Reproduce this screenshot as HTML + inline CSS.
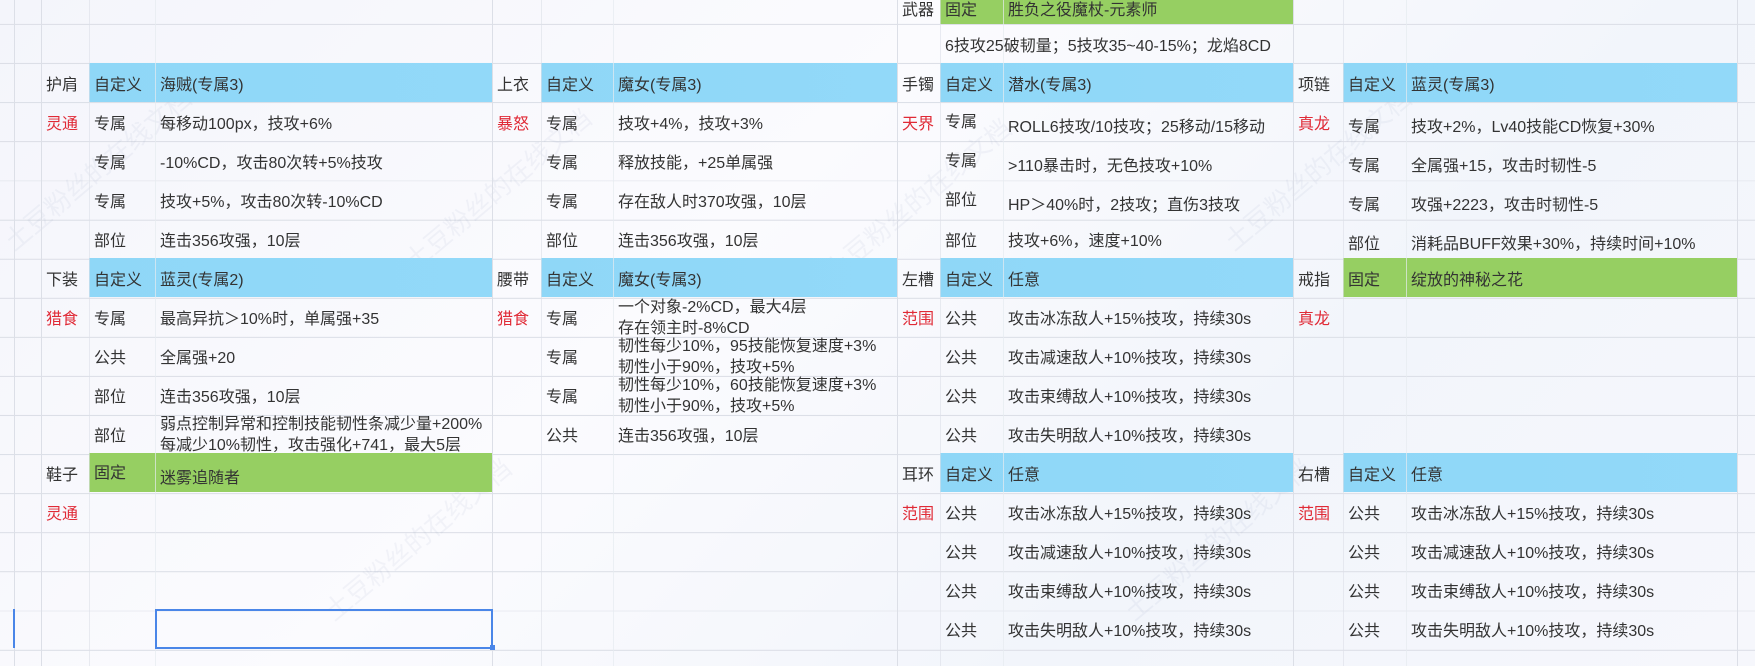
<!DOCTYPE html>
<html><head><meta charset="utf-8"><style>
*{margin:0;padding:0;box-sizing:border-box}
html,body{width:1755px;height:666px;overflow:hidden}
body{position:relative;font-family:"Liberation Sans","Noto Sans CJK SC",sans-serif;font-size:16px;color:#333;
background:linear-gradient(135deg,#f4f5fb 0%,#fbfbfe 40%,#f2f5fb 70%,#f6f7fc 100%);
background-color:#f6f7fc}
.grid{position:absolute;left:0;top:0;width:1755px;height:666px;
background-image:repeating-linear-gradient(to bottom,transparent 0,transparent 38.1px,#dcdfe7 38.1px,#dcdfe7 39.1px);
background-position:0 -14.1px}
.v{position:absolute;top:0;height:666px;width:1px;background:#dcdfe7}
.c{position:absolute;height:39px;padding-left:5px;display:flex;align-items:center;white-space:nowrap;overflow:hidden}
.b{background:linear-gradient(to right,#8fd7f7,#92d9f9);}
.g{background:#96cf62}
.r{color:#e02a36}
.bt{align-items:flex-end;padding-bottom:4px}
.tp{align-items:flex-start;padding-top:5px}
.two{display:block;line-height:21px;padding-top:0;white-space:normal}
.c0{left:41px;width:48px}.c1{left:89px;width:66px}.c2{left:155px;width:337px}
.c3{left:492px;width:49px}.c4{left:541px;width:72px}.c5{left:613px;width:284px}
.c6{left:897px;width:43px}.c7{left:940px;width:63px}.c8{left:1003px;width:290px}
.c9{left:1293px;width:50px}.c10{left:1343px;width:63px}.c11{left:1406px;width:331px}
.k0{top:-15px}.k1{top:24px}.k2{top:63px}.k3{top:102px}.k4{top:141px}.k5{top:180px}.k6{top:219px}
.k7{top:258px}.k8{top:297px}.k9{top:336px}.k10{top:375px}.k11{top:414px}.k12{top:453px}
.k13{top:492px}.k14{top:531px}.k15{top:570px}.k16{top:609px}
.wm{position:absolute;color:rgba(120,130,170,0.07);font-size:26px;transform:rotate(-40deg);white-space:nowrap}
</style></head><body>
<div class="grid"></div>
<div class="wm" style="left:-20px;top:150px">土豆粉丝的在线文档</div>
<div class="wm" style="left:380px;top:170px">土豆粉丝的在线文档</div>
<div class="wm" style="left:800px;top:180px">土豆粉丝的在线文档</div>
<div class="wm" style="left:1200px;top:150px">土豆粉丝的在线文档</div>
<div class="wm" style="left:300px;top:520px">土豆粉丝的在线文档</div>
<div class="wm" style="left:1100px;top:520px">土豆粉丝的在线文档</div>

<div class="c g c7 k0"></div><div class="c g c8 k0"></div>
<div class="c b" style="left:89px;width:403px;top:63px"></div>
<div class="c b" style="left:541px;width:356px;top:63px"></div>
<div class="c b" style="left:940px;width:353px;top:63px"></div>
<div class="c b" style="left:1343px;width:394px;top:63px"></div>
<div class="c b" style="left:89px;width:403px;top:258px"></div>
<div class="c b" style="left:541px;width:356px;top:258px"></div>
<div class="c b" style="left:940px;width:353px;top:258px"></div>
<div class="c g" style="left:1343px;width:394px;top:258px"></div>
<div class="c g" style="left:89px;width:403px;top:453px"></div>
<div class="c b" style="left:940px;width:353px;top:453px"></div>
<div class="c b" style="left:1343px;width:394px;top:453px"></div>

<div class="v" style="left:14px"></div><div class="v" style="left:41px"></div><div class="v" style="left:89px;background:rgba(220,223,231,.6)"></div>
<div class="v" style="left:155px;background:rgba(230,235,240,.7)"></div><div class="v" style="left:492px"></div><div class="v" style="left:541px;background:rgba(220,223,231,.6)"></div>
<div class="v" style="left:613px;background:rgba(230,235,240,.7)"></div><div class="v" style="left:897px"></div><div class="v" style="left:940px;background:rgba(220,223,231,.6)"></div>
<div class="v" style="left:1003px;background:rgba(230,235,240,.7)"></div><div class="v" style="left:1293px"></div><div class="v" style="left:1343px;background:rgba(220,223,231,.6)"></div>
<div class="v" style="left:1406px;background:rgba(230,235,240,.7)"></div><div class="v" style="left:1737px"></div>

<div class="c c6 k0 bt">武器</div>
<div class="c c7 k0 bt">固定</div><div class="c c8 k0 bt">胜负之役魔杖-元素师</div>
<div class="c k1" style="left:940px;width:353px">6技攻25破韧量；5技攻35~40-15%；龙焰8CD</div>

<div class="c c0 k2">护肩</div><div class="c c1 k2">自定义</div><div class="c c2 k2">海贼(专属3)</div>
<div class="c c3 k2">上衣</div><div class="c c4 k2">自定义</div><div class="c c5 k2">魔女(专属3)</div>
<div class="c c6 k2">手镯</div><div class="c c7 k2">自定义</div><div class="c c8 k2">潜水(专属3)</div>
<div class="c c9 k2">项链</div><div class="c c10 k2">自定义</div><div class="c c11 k2">蓝灵(专属3)</div>

<div class="c c0 k3 r">灵通</div><div class="c c1 k3">专属</div><div class="c c2 k3">每移动100px，技攻+6%</div>
<div class="c c3 k3 r">暴怒</div><div class="c c4 k3">专属</div><div class="c c5 k3">技攻+4%，技攻+3%</div>
<div class="c c6 k3 r">天界</div><div class="c c7 k3" style="padding-bottom:4px">专属</div><div class="c c8 k3 bt">ROLL6技攻/10技攻；25移动/15移动</div>
<div class="c c9 k3 r">真龙</div><div class="c c10 k3 bt">专属</div><div class="c c11 k3 bt">技攻+2%，Lv40技能CD恢复+30%</div>

<div class="c c1 k4">专属</div><div class="c c2 k4">-10%CD，攻击80次转+5%技攻</div>
<div class="c c4 k4">专属</div><div class="c c5 k4">释放技能，+25单属强</div>
<div class="c c7 k4" style="padding-bottom:4px">专属</div><div class="c c8 k4 bt">&gt;110暴击时，无色技攻+10%</div>
<div class="c c10 k4 bt">专属</div><div class="c c11 k4 bt">全属强+15，攻击时韧性-5</div>

<div class="c c1 k5">专属</div><div class="c c2 k5">技攻+5%，攻击80次转-10%CD</div>
<div class="c c4 k5">专属</div><div class="c c5 k5">存在敌人时370攻强，10层</div>
<div class="c c7 k5" style="padding-bottom:4px">部位</div><div class="c c8 k5 bt">HP＞40%时，2技攻；直伤3技攻</div>
<div class="c c10 k5 bt">专属</div><div class="c c11 k5 bt">攻强+2223，攻击时韧性-5</div>

<div class="c c1 k6">部位</div><div class="c c2 k6">连击356攻强，10层</div>
<div class="c c4 k6">部位</div><div class="c c5 k6">连击356攻强，10层</div>
<div class="c c7 k6">部位</div><div class="c c8 k6">技攻+6%，速度+10%</div>
<div class="c c10 k6 bt">部位</div><div class="c c11 k6 bt">消耗品BUFF效果+30%，持续时间+10%</div>

<div class="c c0 k7">下装</div><div class="c c1 k7">自定义</div><div class="c c2 k7">蓝灵(专属2)</div>
<div class="c c3 k7">腰带</div><div class="c c4 k7">自定义</div><div class="c c5 k7">魔女(专属3)</div>
<div class="c c6 k7">左槽</div><div class="c c7 k7">自定义</div><div class="c c8 k7">任意</div>
<div class="c c9 k7">戒指</div><div class="c c10 k7">固定</div><div class="c c11 k7">绽放的神秘之花</div>

<div class="c c0 k8 r">猎食</div><div class="c c1 k8">专属</div><div class="c c2 k8">最高异抗＞10%时，单属强+35</div>
<div class="c c3 k8 r">猎食</div><div class="c c4 k8">专属</div><div class="c c5 k8 two">一个对象-2%CD，最大4层<br>存在领主时-8%CD</div>
<div class="c c6 k8 r">范围</div><div class="c c7 k8">公共</div><div class="c c8 k8">攻击冰冻敌人+15%技攻，持续30s</div>
<div class="c c9 k8 r">真龙</div>

<div class="c c1 k9">公共</div><div class="c c2 k9">全属强+20</div>
<div class="c c4 k9">专属</div><div class="c c5 k9 two">韧性每少10%，95技能恢复速度+3%<br>韧性小于90%，技攻+5%</div>
<div class="c c7 k9">公共</div><div class="c c8 k9">攻击减速敌人+10%技攻，持续30s</div>

<div class="c c1 k10">部位</div><div class="c c2 k10">连击356攻强，10层</div>
<div class="c c4 k10">专属</div><div class="c c5 k10 two">韧性每少10%，60技能恢复速度+3%<br>韧性小于90%，技攻+5%</div>
<div class="c c7 k10">公共</div><div class="c c8 k10">攻击束缚敌人+10%技攻，持续30s</div>

<div class="c c1 k11">部位</div><div class="c c2 k11 two">弱点控制异常和控制技能韧性条减少量+200%<br>每减少10%韧性，攻击强化+741，最大5层</div>
<div class="c c4 k11">公共</div><div class="c c5 k11">连击356攻强，10层</div>
<div class="c c7 k11">公共</div><div class="c c8 k11">攻击失明敌人+10%技攻，持续30s</div>

<div class="c c0 k12">鞋子</div><div class="c c1 k12" style="padding-bottom:4px">固定</div><div class="c c2 k12 bt">迷雾追随者</div>
<div class="c c6 k12">耳环</div><div class="c c7 k12">自定义</div><div class="c c8 k12">任意</div>
<div class="c c9 k12">右槽</div><div class="c c10 k12">自定义</div><div class="c c11 k12">任意</div>

<div class="c c0 k13 r">灵通</div>
<div class="c c6 k13 r">范围</div><div class="c c7 k13">公共</div><div class="c c8 k13">攻击冰冻敌人+15%技攻，持续30s</div>
<div class="c c9 k13 r">范围</div><div class="c c10 k13">公共</div><div class="c c11 k13">攻击冰冻敌人+15%技攻，持续30s</div>

<div class="c c7 k14">公共</div><div class="c c8 k14">攻击减速敌人+10%技攻，持续30s</div>
<div class="c c10 k14">公共</div><div class="c c11 k14">攻击减速敌人+10%技攻，持续30s</div>

<div class="c c7 k15">公共</div><div class="c c8 k15">攻击束缚敌人+10%技攻，持续30s</div>
<div class="c c10 k15">公共</div><div class="c c11 k15">攻击束缚敌人+10%技攻，持续30s</div>

<div class="c c7 k16">公共</div><div class="c c8 k16">攻击失明敌人+10%技攻，持续30s</div>
<div class="c c10 k16">公共</div><div class="c c11 k16">攻击失明敌人+10%技攻，持续30s</div>

<div style="position:absolute;left:155px;top:609px;width:338px;height:40px;border:2px solid #4a86e8"></div>
<div style="position:absolute;left:490px;top:645px;width:5px;height:5px;background:#4a86e8"></div>
<div style="position:absolute;left:13px;top:609px;width:2px;height:39px;background:#4a86e8"></div>
</body></html>
